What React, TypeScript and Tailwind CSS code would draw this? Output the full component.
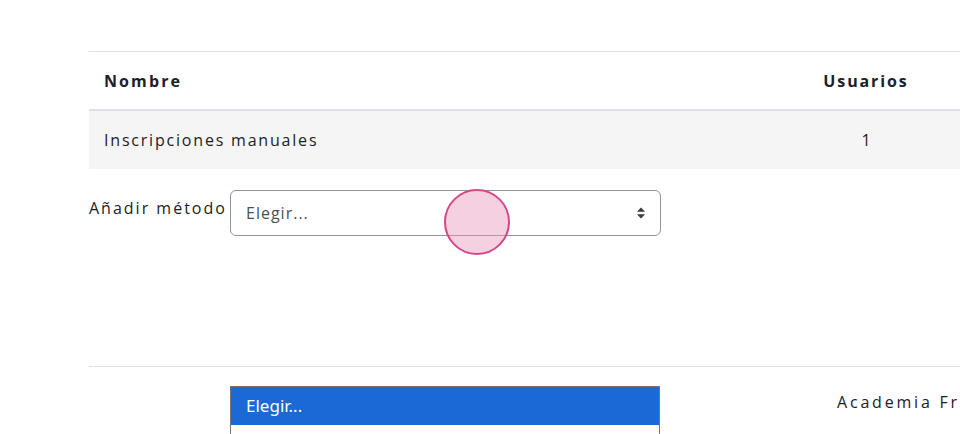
import React from "react";

const font = { fontFamily: "'Open Sans', 'Noto Sans', sans-serif" };

export default function App() {
  return (
    <div className="relative w-[960px] h-[434px] overflow-hidden bg-white text-[#1d2125]" style={font}>
      <div className="pt-[51px] pl-[89px]">
        <div className="w-[900px] border-t border-[#dee2e6]">
          <div className="flex h-[59px] items-center border-b-2 border-[#dee2e6]">
            <div className="w-[721px] pl-[15px] text-[16px] font-bold tracking-[2.1px]">Nombre</div>
            <div className="w-[112px] text-center text-[16px] font-bold tracking-[1.9px]">Usuarios</div>
          </div>
          <div className="flex h-[58px] items-center bg-[#f5f5f5]">
            <div className="w-[721px] pl-[15px] text-[16px] tracking-[1.8px]">Inscripciones manuales</div>
            <div className="w-[112px] text-center text-[16px]">1</div>
          </div>
        </div>
        <div className="mt-[21px] flex items-start">
          <div className="w-[141px] pt-[6px] text-[16px] tracking-[2px] whitespace-nowrap">Añadir método</div>
          <div className="relative flex h-[46px] w-[431px] items-center justify-between rounded-[6px] border border-[#8f959e] pl-[15px] pr-[14px]">
            <span className="text-[16px] text-[#495057] tracking-[1px]">Elegir...</span>
            <svg width="10" height="12" viewBox="0 0 10 12">
              <path d="M5 0.5 L9 4.8 H1 Z" fill="#343a40" />
              <path d="M5 11.5 L9 7.2 H1 Z" fill="#343a40" />
            </svg>
          </div>
        </div>
        <div className="mt-[130px] w-[900px] border-t border-[#dee2e6]" />
        <div className="mt-[23px] pl-[748px] text-[16px] tracking-[2.8px] whitespace-nowrap">Academia Fri</div>
      </div>

      <div className="absolute left-[444px] top-[189px] h-[66px] w-[66px] rounded-full border-2 border-[#d6478a] bg-[#e896bd]/45" />

      <div className="absolute left-[230px] top-[386px] h-[60px] w-[430px] border border-[#767676] bg-white">
        <div className="flex h-[38px] items-center bg-[#1a69d4] pl-[15px] text-[17px] text-white" style={{ fontFamily: "'Noto Sans', sans-serif" }}>
          Elegir...
        </div>
      </div>
    </div>
  );
}
